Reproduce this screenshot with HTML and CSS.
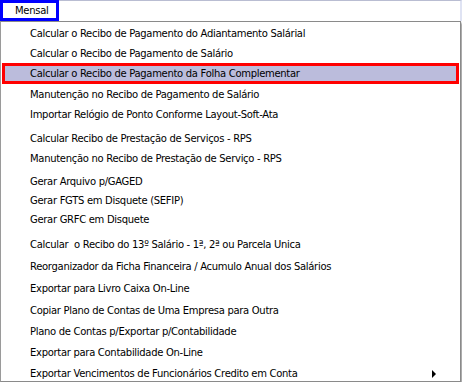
FILE: index.html
```html
<!DOCTYPE html>
<html lang="pt-BR">

<head>
    <meta charset="UTF-8">
    <title>Mensal</title>
    <link rel="stylesheet" href="styles.css">
</head>

<body>
    <div class="menubar">
        <span class="menu-title">Mensal</span>
    </div>
    <ul class="dropdown">
        <li class="item">Calcular o Recibo de Pagamento do Adiantamento Salárial</li>
        <li class="item">Calcular o Recibo de Pagamento de Salário</li>
        <li class="item selected">Calcular o Recibo de Pagamento da Folha Complementar</li>
        <li class="item">Manutenção no Recibo de Pagamento de Salário</li>
        <li class="item">Importar Relógio de Ponto Conforme Layout-Soft-Ata</li>
        <li class="item sep">Calcular Recibo de Prestação de Serviços - RPS</li>
        <li class="item">Manutenção no Recibo de Prestação de Serviço - RPS</li>
        <li class="item short sep">Gerar Arquivo p/GAGED</li>
        <li class="item short">Gerar FGTS em Disquete (SEFIP)</li>
        <li class="item short">Gerar GRFC em Disquete</li>
        <li class="item tall sep">Calcular&nbsp; o Recibo do 13º Salário - 1ª, 2ª ou Parcela Unica</li>
        <li class="item tall">Reorganizador da Ficha Financeira / Acumulo Anual dos Salários</li>
        <li class="item tall">Exportar para Livro Caixa On-Line</li>
        <li class="item tall">Copiar Plano de Contas de Uma Empresa para Outra</li>
        <li class="item">Plano de Contas p/Exportar p/Contabilidade</li>
        <li class="item taller">Exportar para Contabilidade On-Line</li>
        <li class="item last">Exportar Vencimentos de Funcionários Credito em Conta<span class="arrow"></span></li>
    </ul>
</body>

</html>
```

FILE: styles.css
```css
html, body {
    margin: 0;
    background: #fff;
}
body {
    font-family: "DejaVu Sans", sans-serif;
    font-size: 10px;
    letter-spacing: -0.3px;
    color: #000;
}
.menubar {
    width: 462px;
    height: 21px;
    box-sizing: border-box;
    border-top: 1px solid #b9bdd2;
    border-right: 2px solid #dfe3f3;
}
.menu-title {
    display: inline-block;
    width: 59px;
    height: 21px;
    margin-top: -1px;
    box-sizing: border-box;
    border: 3px solid #0000ff;
    padding-left: 12px;
    line-height: 15px;
}
.dropdown {
    list-style: none;
    margin: 0;
    padding: 1px 0 0 0;
    width: 461px;
    height: 361px;
    box-sizing: border-box;
    border: 1px solid #8a8a8a;
    border-left-color: #9a9a9a;
    box-shadow: 2px 2px 2px rgba(0, 0, 0, 0.35);
}
.item {
    display: flex;
    align-items: center;
    height: 20px;
    padding-left: 29px;
    white-space: nowrap;
}
.short {
    height: 19px;
}
.tall {
    height: 22px;
}
.taller {
    height: 23px;
}
.sep {
    margin-top: 4px;
}
.last {
    height: 17px;
    padding-top: 2px;
    box-sizing: border-box;
}
.selected {
    height: 21px;
    margin: 0 1px;
    padding-left: 25px;
    box-sizing: border-box;
    border: 3px solid #ff0000;
    background: #bbbcdc;
}
.arrow {
    margin-left: auto;
    margin-right: 24px;
    width: 0;
    height: 0;
    border-top: 4px solid transparent;
    border-bottom: 4px solid transparent;
    border-left: 4px solid #000;
}
```
